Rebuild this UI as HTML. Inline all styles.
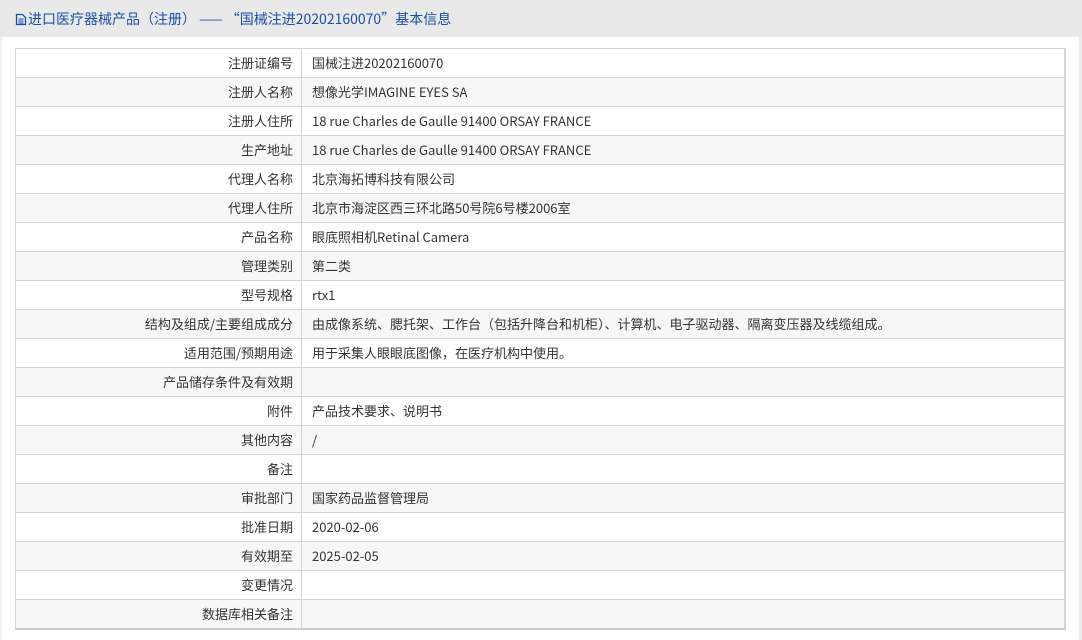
<!DOCTYPE html>
<html><head><meta charset="utf-8"><style>
html,body{margin:0;padding:0;width:1082px;height:640px;overflow:hidden;background:#fff;font-family:"Noto Sans CJK SC","Liberation Sans",sans-serif;}
.hd{position:absolute;left:0;top:0;width:1082px;height:37px;background:#e9e9e9;}
.hd .t{position:absolute;left:15px;top:9px;font-size:14px;color:#1a4fa8;line-height:20px;white-space:nowrap;}
.hd svg{vertical-align:-2px;margin-right:1px}
.rb{position:absolute;left:1079px;top:37px;width:3px;height:603px;background:#ececec;}
.lb{position:absolute;left:0;top:37px;width:2px;height:603px;background:#f0f0f0;}
table{position:absolute;left:15px;top:48px;width:1051px;border-collapse:collapse;font-size:13px;color:#333;border-bottom:2px solid #ccc;border-right:2px solid #d4d4d9;}
td{border:1px solid #d4d4d4;height:28px;padding:0;line-height:28px;white-space:nowrap;}
td.l{width:277px;text-align:right;padding-right:8px;}
td.v{padding-left:10px;}
tr:nth-child(even) td{background:#f7f7f7;}
</style></head><body>
<div class="hd"><div class="t"><svg width="12" height="13" viewBox="0 0 12 13"><path d="M1.5 1.5h6l3 3v7h-9z" fill="none" stroke="#1a4fa8" stroke-width="1.3"/><path d="M3.5 6h5M3.5 8h5M3.5 10h5" stroke="#1a4fa8" stroke-width="1"/></svg>进口医疗器械产品（注册） —— “国械注进20202160070”基本信息</div></div>
<div class="lb"></div><div class="rb"></div>
<table>
<tr><td class="l">注册证编号</td><td class="v">国械注进20202160070</td></tr>
<tr><td class="l">注册人名称</td><td class="v">想像光学IMAGINE EYES SA</td></tr>
<tr><td class="l">注册人住所</td><td class="v">18 rue Charles de Gaulle 91400 ORSAY FRANCE</td></tr>
<tr><td class="l">生产地址</td><td class="v">18 rue Charles de Gaulle 91400 ORSAY FRANCE</td></tr>
<tr><td class="l">代理人名称</td><td class="v">北京海拓博科技有限公司</td></tr>
<tr><td class="l">代理人住所</td><td class="v">北京市海淀区西三环北路50号院6号楼2006室</td></tr>
<tr><td class="l">产品名称</td><td class="v">眼底照相机Retinal Camera</td></tr>
<tr><td class="l">管理类别</td><td class="v">第二类</td></tr>
<tr><td class="l">型号规格</td><td class="v">rtx1</td></tr>
<tr><td class="l">结构及组成/主要组成成分</td><td class="v">由成像系统、腮托架、工作台（包括升降台和机柜）、计算机、电子驱动器、隔离变压器及线缆组成。</td></tr>
<tr><td class="l">适用范围/预期用途</td><td class="v">用于采集人眼眼底图像，在医疗机构中使用。</td></tr>
<tr><td class="l">产品储存条件及有效期</td><td class="v"></td></tr>
<tr><td class="l">附件</td><td class="v">产品技术要求、说明书</td></tr>
<tr><td class="l">其他内容</td><td class="v">/</td></tr>
<tr><td class="l">备注</td><td class="v"></td></tr>
<tr><td class="l">审批部门</td><td class="v">国家药品监督管理局</td></tr>
<tr><td class="l">批准日期</td><td class="v">2020-02-06</td></tr>
<tr><td class="l">有效期至</td><td class="v">2025-02-05</td></tr>
<tr><td class="l">变更情况</td><td class="v"></td></tr>
<tr><td class="l">数据库相关备注</td><td class="v"></td></tr>
</table>
</body></html>
